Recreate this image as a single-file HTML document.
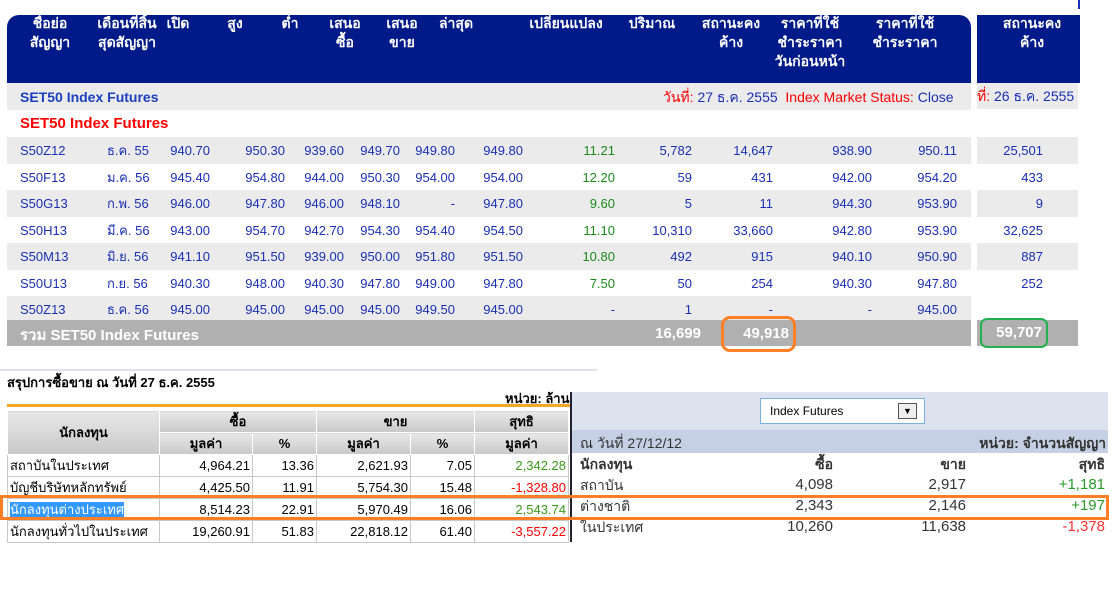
<!DOCTYPE html>
<html><head><meta charset="utf-8">
<style>
*{margin:0;padding:0;box-sizing:border-box}
body{width:1114px;height:605px;background:#fff;font-family:"Liberation Sans","DejaVu Sans",sans-serif;font-size:13px;color:#1a2fb5;position:relative;overflow:hidden}
.a{position:absolute;white-space:nowrap}
.hd{position:absolute;background:#001a8a;color:#fff;font-weight:bold;font-size:13px}
.hl{position:absolute;text-align:center;line-height:19px;color:#fff;font-size:14px;font-weight:bold}
.row{position:absolute;left:7px;width:964px;height:27px}
.row span{position:absolute;top:6px;white-space:nowrap}
.row span.m{top:3px}
.r{text-align:right}
.g{color:#1a8a1a}
.red{color:#f00}
.rr{position:absolute;left:977px;width:101px;height:27px}
.rr span{position:absolute;top:6px;right:35px}
table.b{position:absolute;left:7px;top:410px;border-collapse:collapse;font-size:13px;color:#000}
table.b td{border:1px solid #c8c8c8;height:22px;padding:0 2px;text-align:right}
table.b td.l{text-align:left}
table.b th{border:1px solid #fff;background:linear-gradient(#e8e8e8,#c8c8c8);height:21px;font-weight:bold;text-align:center}
</style></head><body>
<div class="hd" style="left:7px;top:15px;width:964px;height:68px;border-radius:12px 12px 0 0"></div>
<div class="hd" style="left:977px;top:15px;width:103px;height:68px"></div>
<div class="a" style="left:1078px;top:0;width:2px;height:9px;background:#1a2fb5"></div>
<div class="hl" style="left:18px;top:14px;width:64px">ชื่อย่อ<br>สัญญา</div>
<div class="hl" style="left:84px;top:14px;width:86px">เดือนที่สิ้น<br>สุดสัญญา</div>
<div class="hl" style="left:158px;top:14px;width:40px">เปิด</div>
<div class="hl" style="left:215px;top:14px;width:40px">สูง</div>
<div class="hl" style="left:270px;top:14px;width:40px">ต่ำ</div>
<div class="hl" style="left:325px;top:14px;width:40px">เสนอ<br>ซื้อ</div>
<div class="hl" style="left:382px;top:14px;width:40px">เสนอ<br>ขาย</div>
<div class="hl" style="left:434px;top:14px;width:44px">ล่าสุด</div>
<div class="hl" style="left:520px;top:14px;width:92px">เปลี่ยนแปลง</div>
<div class="hl" style="left:618px;top:14px;width:68px">ปริมาณ</div>
<div class="hl" style="left:693px;top:14px;width:76px">สถานะคง<br>ค้าง</div>
<div class="hl" style="left:768px;top:14px;width:84px">ราคาที่ใช้<br>ชำระราคา<br>วันก่อนหน้า</div>
<div class="hl" style="left:866px;top:14px;width:78px">ราคาที่ใช้<br>ชำระราคา</div>
<div class="hl" style="left:992px;top:14px;width:80px">สถานะคง<br>ค้าง</div>

<div class="a" style="left:7px;top:83px;width:964px;height:27px;background:#ebebeb"></div>
<div class="a" style="left:977px;top:83px;width:101px;height:26px;background:#ebebeb"></div>
<div class="a" style="left:20px;top:89px;font-weight:bold;color:#1a3fc0;font-size:14px">SET50 Index Futures</div>
<div class="a" style="left:663px;top:87px;font-size:14px"><span class="red">วันที่:</span> 27 ธ.ค. 2555 &nbsp;<span class="red">Index Market Status:</span> Close</div>
<div class="a" style="left:977px;top:86px;width:101px;overflow:hidden;font-size:14px"><span class="red">ที่:</span> 26 ธ.ค. 2555</div>
<div class="a" style="left:20px;top:115px;font-weight:bold;color:#f00;font-size:15px">SET50 Index Futures</div>

<div class="row" style="top:137px;background:#ebebeb"><span style="left:13px">S50Z12</span><span class="m" style="left:100px">ธ.ค. 55</span><span class="r" style="right:761px">940.70</span><span class="r" style="right:686px">950.30</span><span class="r" style="right:627px">939.60</span><span class="r" style="right:571px">949.70</span><span class="r" style="right:516px">949.80</span><span class="r" style="right:448px">949.80</span><span class="r g" style="right:356px">11.21</span><span class="r" style="right:279px">5,782</span><span class="r" style="right:198px">14,647</span><span class="r" style="right:99px">938.90</span><span class="r" style="right:14px">950.11</span></div>
<div class="row" style="top:164px"><span style="left:13px">S50F13</span><span class="m" style="left:100px">ม.ค. 56</span><span class="r" style="right:761px">945.40</span><span class="r" style="right:686px">954.80</span><span class="r" style="right:627px">944.00</span><span class="r" style="right:571px">950.30</span><span class="r" style="right:516px">954.00</span><span class="r" style="right:448px">954.00</span><span class="r g" style="right:356px">12.20</span><span class="r" style="right:279px">59</span><span class="r" style="right:198px">431</span><span class="r" style="right:99px">942.00</span><span class="r" style="right:14px">954.20</span></div>
<div class="row" style="top:190px;background:#ebebeb"><span style="left:13px">S50G13</span><span class="m" style="left:100px">ก.พ. 56</span><span class="r" style="right:761px">946.00</span><span class="r" style="right:686px">947.80</span><span class="r" style="right:627px">946.00</span><span class="r" style="right:571px">948.10</span><span class="r" style="right:516px">-</span><span class="r" style="right:448px">947.80</span><span class="r g" style="right:356px">9.60</span><span class="r" style="right:279px">5</span><span class="r" style="right:198px">11</span><span class="r" style="right:99px">944.30</span><span class="r" style="right:14px">953.90</span></div>
<div class="row" style="top:217px"><span style="left:13px">S50H13</span><span class="m" style="left:100px">มี.ค. 56</span><span class="r" style="right:761px">943.00</span><span class="r" style="right:686px">954.70</span><span class="r" style="right:627px">942.70</span><span class="r" style="right:571px">954.30</span><span class="r" style="right:516px">954.40</span><span class="r" style="right:448px">954.50</span><span class="r g" style="right:356px">11.10</span><span class="r" style="right:279px">10,310</span><span class="r" style="right:198px">33,660</span><span class="r" style="right:99px">942.80</span><span class="r" style="right:14px">953.90</span></div>
<div class="row" style="top:243px;background:#ebebeb"><span style="left:13px">S50M13</span><span class="m" style="left:100px">มิ.ย. 56</span><span class="r" style="right:761px">941.10</span><span class="r" style="right:686px">951.50</span><span class="r" style="right:627px">939.00</span><span class="r" style="right:571px">950.00</span><span class="r" style="right:516px">951.80</span><span class="r" style="right:448px">951.50</span><span class="r g" style="right:356px">10.80</span><span class="r" style="right:279px">492</span><span class="r" style="right:198px">915</span><span class="r" style="right:99px">940.10</span><span class="r" style="right:14px">950.90</span></div>
<div class="row" style="top:270px"><span style="left:13px">S50U13</span><span class="m" style="left:100px">ก.ย. 56</span><span class="r" style="right:761px">940.30</span><span class="r" style="right:686px">948.00</span><span class="r" style="right:627px">940.30</span><span class="r" style="right:571px">947.80</span><span class="r" style="right:516px">949.00</span><span class="r" style="right:448px">947.80</span><span class="r g" style="right:356px">7.50</span><span class="r" style="right:279px">50</span><span class="r" style="right:198px">254</span><span class="r" style="right:99px">940.30</span><span class="r" style="right:14px">947.80</span></div>
<div class="row" style="top:296px;background:#ebebeb"><span style="left:13px">S50Z13</span><span class="m" style="left:100px">ธ.ค. 56</span><span class="r" style="right:761px">945.00</span><span class="r" style="right:686px">945.00</span><span class="r" style="right:627px">945.00</span><span class="r" style="right:571px">945.00</span><span class="r" style="right:516px">949.50</span><span class="r" style="right:448px">945.00</span><span class="r" style="right:356px">-</span><span class="r" style="right:279px">1</span><span class="r" style="right:198px">-</span><span class="r" style="right:99px">-</span><span class="r" style="right:14px">945.00</span></div>
<div class="row" style="top:320px;height:26px;background:#b0b0b0;color:#fff;font-weight:bold;font-size:15px"><span style="left:13px;top:3px">รวม SET50 Index Futures</span><span style="right:270px;top:5px">16,699</span><span style="right:182px;top:5px">49,918</span></div>

<div class="rr" style="top:137px;background:#ebebeb"><span>25,501</span></div>
<div class="rr" style="top:164px"><span>433</span></div>
<div class="rr" style="top:190px;background:#ebebeb"><span>9</span></div>
<div class="rr" style="top:217px"><span>32,625</span></div>
<div class="rr" style="top:243px;background:#ebebeb"><span>887</span></div>
<div class="rr" style="top:270px"><span>252</span></div>
<div class="rr" style="top:320px;height:26px;background:#b0b0b0;color:#fff;font-weight:bold;font-size:15px"><span style="top:4px;right:36px">59,707</span></div>

<div class="a" style="left:721px;top:316px;width:75px;height:36px;border:3px solid #ff7f27;border-radius:9px"></div>
<div class="a" style="left:980px;top:318px;width:68px;height:30px;border:2px solid #22b14c;border-radius:7px"></div>

<div class="a" style="left:0;top:369px;width:597px;height:2px;background:#dde3ee"></div>
<div class="a" style="left:7px;top:372px;font-weight:bold;color:#000">สรุปการซื้อขาย ณ วันที่ 27 ธ.ค. 2555</div>
<div class="a" style="left:505px;top:388px;font-weight:bold;color:#000;width:65px;overflow:hidden">หน่วย: ล้าน</div>
<div class="a" style="left:7px;top:404px;width:563px;height:3px;background:#f5a623"></div>
<table class="b">
<tr><th rowspan="2" style="width:152px">นักลงทุน</th><th colspan="2">ซื้อ</th><th colspan="2">ขาย</th><th>สุทธิ</th></tr>
<tr><th style="width:93px">มูลค่า</th><th style="width:64px">%</th><th style="width:94px">มูลค่า</th><th style="width:64px">%</th><th style="width:94px">มูลค่า</th></tr>
<tr><td class="l">สถาบันในประเทศ</td><td>4,964.21</td><td>13.36</td><td>2,621.93</td><td>7.05</td><td style="color:#3a9a1a">2,342.28</td></tr>
<tr><td class="l">บัญชีบริษัทหลักทรัพย์</td><td>4,425.50</td><td>11.91</td><td>5,754.30</td><td>15.48</td><td style="color:#f00">-1,328.80</td></tr>
<tr><td class="l"><span style="background:#3399ff;color:#fff">นักลงทุนต่างประเทศ</span></td><td>8,514.23</td><td>22.91</td><td>5,970.49</td><td>16.06</td><td style="color:#3a9a1a">2,543.74</td></tr>
<tr><td class="l">นักลงทุนทั่วไปในประเทศ</td><td>19,260.91</td><td>51.83</td><td>22,818.12</td><td>61.40</td><td style="color:#f00">-3,557.22</td></tr>
</table>

<div class="a" style="left:570px;top:392px;width:2px;height:150px;background:#223"></div>
<div class="a" style="left:572px;top:392px;width:536px;height:38px;background:#dde3ee"></div>
<div class="a" style="left:760px;top:398px;width:165px;height:26px;background:#fff;border:1px solid #7ab0e0"></div>
<div class="a" style="left:770px;top:404px;color:#000;font-size:12px">Index Futures</div>
<div class="a" style="left:898px;top:403px;width:19px;height:16px;border:1px solid #555;background:#eee;font-size:9px;color:#000;text-align:center;line-height:14px">▼</div>
<div class="a" style="left:572px;top:430px;width:536px;height:23px;background:#c5d0e5"></div>
<div class="a" style="left:580px;top:433px;color:#333;font-size:14px">ณ วันที่ 27/12/12</div>
<div class="a" style="right:8px;top:433px;color:#333;font-size:14px;font-weight:bold">หน่วย: จำนวนสัญญา</div>
<div class="a" style="left:580px;top:454px;color:#333;font-size:14px;font-weight:bold">นักลงทุน</div>
<div class="a" style="right:281px;top:454px;color:#333;font-size:14px;font-weight:bold">ซื้อ</div>
<div class="a" style="right:148px;top:454px;color:#333;font-size:14px;font-weight:bold">ขาย</div>
<div class="a" style="right:9px;top:454px;color:#333;font-size:14px;font-weight:bold">สุทธิ</div>
<div class="a" style="left:580px;top:475px;color:#333;font-size:14px">สถาบัน</div>
<div class="a" style="right:281px;top:476px;color:#333;font-size:15px">4,098</div>
<div class="a" style="right:148px;top:476px;color:#333;font-size:15px">2,917</div>
<div class="a" style="right:9px;top:476px;color:#2a9a2a;font-size:15px">+1,181</div>
<div class="a" style="left:580px;top:496px;color:#333;font-size:14px">ต่างชาติ</div>
<div class="a" style="right:281px;top:497px;color:#333;font-size:15px">2,343</div>
<div class="a" style="right:148px;top:497px;color:#333;font-size:15px">2,146</div>
<div class="a" style="right:9px;top:497px;color:#2a9a2a;font-size:15px">+197</div>
<div class="a" style="left:580px;top:517px;color:#333;font-size:14px">ในประเทศ</div>
<div class="a" style="right:281px;top:518px;color:#333;font-size:15px">10,260</div>
<div class="a" style="right:148px;top:518px;color:#333;font-size:15px">11,638</div>
<div class="a" style="right:9px;top:518px;color:#f33;font-size:15px">-1,378</div>

<div class="a" style="left:0;top:495px;width:1109px;height:25px;border:3px solid #ff7f27"></div>
</body></html>
